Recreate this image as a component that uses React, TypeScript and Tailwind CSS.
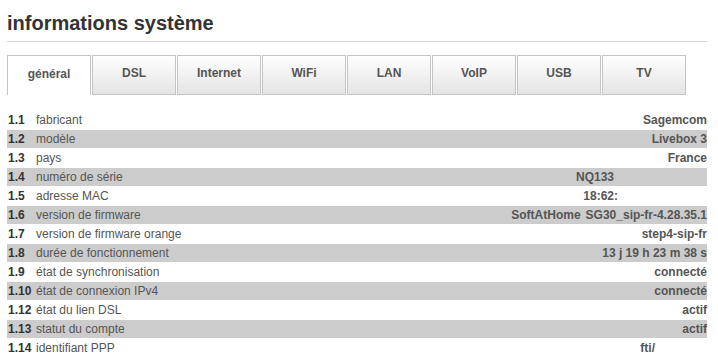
import React from "react";

const tabs = ["général", "DSL", "Internet", "WiFi", "LAN", "VoIP", "USB", "TV"];

// value pr = right padding where the value ends earlier in the cell
const rows: { num: string; label: string; value: React.ReactNode; pr?: string }[] = [
  { num: "1.1", label: "fabricant", value: "Sagemcom" },
  { num: "1.2", label: "modèle", value: "Livebox 3" },
  { num: "1.3", label: "pays", value: "France" },
  { num: "1.4", label: "numéro de série", value: "NQ133", pr: "pr-[93px]" },
  { num: "1.5", label: "adresse MAC", value: "18:62:", pr: "pr-[89px]" },
  {
    num: "1.6",
    label: "version de firmware",
    value: (
      <>
        SoftAtHome<span className="ml-[5px]">SG30_sip-fr-4.28.35.1</span>
      </>
    ),
  },
  { num: "1.7", label: "version de firmware orange", value: "step4-sip-fr" },
  { num: "1.8", label: "durée de fonctionnement", value: "13 j 19 h 23 m 38 s" },
  { num: "1.9", label: "état de synchronisation", value: "connecté" },
  { num: "1.10", label: "état de connexion IPv4", value: "connecté" },
  { num: "1.12", label: "état du lien DSL", value: "actif" },
  { num: "1.13", label: "statut du compte", value: "actif" },
  { num: "1.14", label: "identifiant PPP", value: "fti/", pr: "pr-[52px]" },
];

export default function App() {
  return (
    <div
      className="w-[718px] h-[362px] overflow-hidden bg-white pl-[7px] pr-[11px] pt-[11px]"
      style={{ fontFamily: '"Liberation Sans", Arial, sans-serif' }}
    >
      {/* Title */}
      <h1 className="text-[20px] leading-[24px] font-bold text-[#333333] pb-[6px] border-b border-[#d6d6d6]">
        informations système
      </h1>

      {/* Tabs */}
      <div className="flex gap-[1px] mt-[13px]">
        {tabs.map((t, i) => (
          <div
            key={t}
            className={
              i === 0
                ? "w-[84px] h-[40px] flex items-center justify-center border border-b-0 border-[#c4c4c4] bg-white text-[12px] font-bold text-[#555555] pb-[4px]"
                : "w-[84px] h-[40px] flex items-center justify-center border border-[#c4c4c4] bg-gradient-to-b from-white to-[#e4e4e4] text-[12px] font-bold text-[#555555] pb-[4px]"
            }
          >
            {t}
          </div>
        ))}
      </div>

      {/* Info rows */}
      <div className="mt-[16px] flex flex-col gap-[1px]">
        {rows.map((r, i) => (
          <div
            key={r.num}
            className={
              "flex items-center h-[18px] text-[12px] " +
              (i % 2 === 1 ? "bg-[#cccccc]" : "bg-white")
            }
          >
            <span className="w-[29px] pl-[1px] font-bold text-[#333333]">{r.num}</span>
            <span className="flex-1 text-[#555555]">{r.label}</span>
            <span className={"font-bold text-[#555555] text-right " + (r.pr ?? "")}>
              {r.value}
            </span>
          </div>
        ))}
      </div>
    </div>
  );
}
